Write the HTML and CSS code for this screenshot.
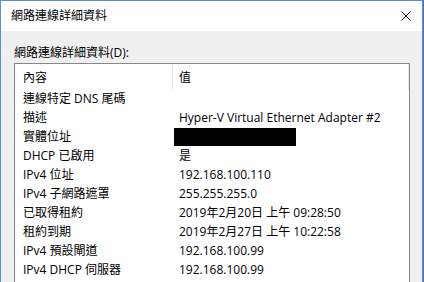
FILE: index.html
```html
<!DOCTYPE html>
<html lang="zh-Hant">
<head>
<meta charset="utf-8">
<link rel="stylesheet" href="styles.css">
</head>
<body>
<div class="window">
  <div class="titlebar">
    <span class="title">網路連線詳細資料</span>
    <svg class="close" width="10" height="10" viewBox="0 0 10 10"><path d="M0.5 0.5 L9.5 9.5 M9.5 0.5 L0.5 9.5" stroke="#000" stroke-width="1" fill="none"/></svg>
  </div>
  <div class="content">
    <div class="label">網路連線詳細資料(D):</div>
    <div class="listview">
      <div class="header">
        <div class="hcell first">內容</div>
        <div class="hcell second">值</div>
      </div>
      <div class="row"><div class="k">連線特定 DNS 尾碼</div><div class="v"></div></div>
      <div class="row"><div class="k">描述</div><div class="v">Hyper-V Virtual Ethernet Adapter #2</div></div>
      <div class="row"><div class="k">實體位址</div><div class="v"><span class="redact"></span></div></div>
      <div class="row"><div class="k">DHCP 已啟用</div><div class="v">是</div></div>
      <div class="row"><div class="k">IPv4 位址</div><div class="v">192.168.100.110</div></div>
      <div class="row"><div class="k">IPv4 子網路遮罩</div><div class="v">255.255.255.0</div></div>
      <div class="row"><div class="k">已取得租約</div><div class="v">2019年2月20日 上午 09:28:50</div></div>
      <div class="row"><div class="k">租約到期</div><div class="v">2019年2月27日 上午 10:22:58</div></div>
      <div class="row"><div class="k">IPv4 預設閘道</div><div class="v">192.168.100.99</div></div>
      <div class="row"><div class="k">IPv4 DHCP 伺服器</div><div class="v">192.168.100.99</div></div>
    </div>
  </div>
</div>
</body>
</html>
```
FILE: styles.css
```css
html, body {
  margin: 0;
  padding: 0;
  background: #3b78c4;
  overflow: hidden;
}
body {
  width: 424px;
  height: 282px;
  font-family: "Open Sans", "Noto Sans CJK TC", sans-serif;
  font-size: 12px;
  color: #000;
}
.window {
  width: 421px;
  height: 281px;
  border-top: 1px solid #5b8fd2;
  border-left: 1px solid #5b8fd2;
  border-right: 1px solid #5b8fd2;
  background: #f0f0f0;
  display: flex;
  flex-direction: column;
}
.titlebar {
  height: 30px;
  background: #fff;
  display: flex;
  align-items: center;
  justify-content: space-between;
  padding: 0 11px 0 10px;
  flex: none;
}
.title {
  line-height: 16px;
}
.close {
  display: block;
}
.content {
  padding: 13px 0 0 13px;
  flex: 1;
  display: flex;
  flex-direction: column;
  overflow: hidden;
}
.label {
  line-height: 18px;
  margin-bottom: 1px;
}
.listview {
  width: 394px;
  flex: 1;
  background: #fff;
  border: 1px solid #828790;
  border-bottom: none;
}
.header {
  display: flex;
  height: 25px;
  align-items: stretch;
}
.hcell {
  display: flex;
  align-items: center;
  padding-top: 1px;
}
.hcell.first {
  width: 149px;
  padding-left: 8px;
  border-right: 1px solid #e5e5e5;
}
.hcell.second {
  width: 229px;
  padding-left: 6px;
  border-right: 1px solid #e5e5e5;
}
.row {
  display: flex;
  height: 19px;
  line-height: 19px;
  white-space: nowrap;
}
.k {
  width: 149px;
  padding-left: 8px;
  flex: none;
}
.v {
  padding-left: 7px;
  display: flex;
  align-items: center;
}
.redact {
  display: block;
  width: 122px;
  height: 18px;
  background: #000;
  margin-left: -5px;
}
```
